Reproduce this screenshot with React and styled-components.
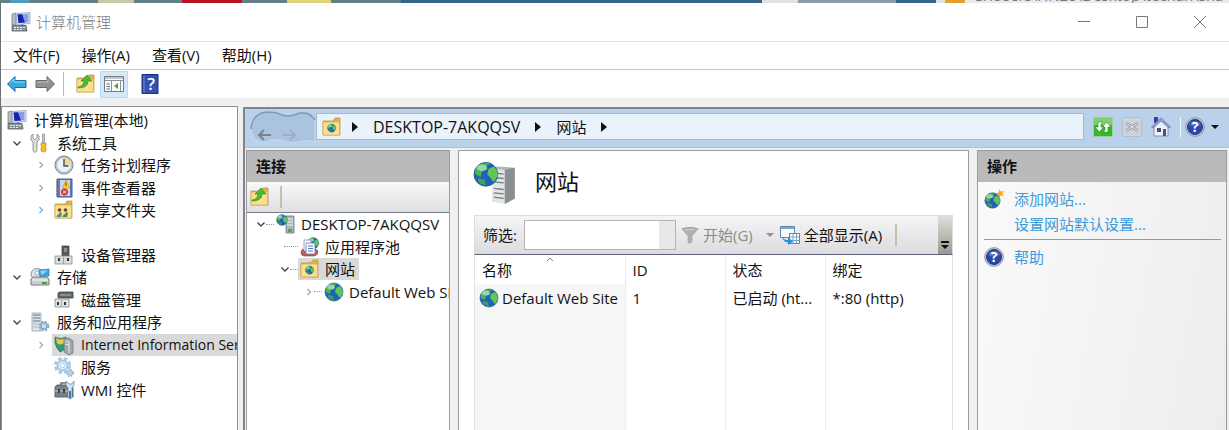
import { useState } from "react";
import styled, { createGlobalStyle } from "styled-components";

const GlobalStyle = createGlobalStyle`
  * {
    box-sizing: border-box;
  }

  html,
  body,
  #root {
    height: 100%;
    margin: 0;
  }

  body {
    overflow: hidden;
    background: #f0f0f0;
    color: #111;
    font: 15px/22px "Open Sans", "Noto Sans CJK SC", sans-serif;
  }

  button,
  input {
    font: inherit;
    color: inherit;
  }

  svg {
    display: block;
    flex: none;
    overflow: visible;
  }
`;

/* ---------- icons ---------- */

const Svg = ({ size = 20, children, ...rest }) => (
  <svg width={size} height={size} viewBox="0 0 20 20" aria-hidden="true" {...rest}>
    {children}
  </svg>
);

const ComputerIcon = () => (
  <Svg>
    <path d="M1 2l4-1v12H1z" fill="#b4bbc3" stroke="#7b848e" strokeWidth=".8" />
    <path d="M5 1.500l14-1v11l-13 1z" fill="#dfe5f0" stroke="#959fb6" strokeWidth=".8" />
    <path d="M6.500 2.500l11-.8v8.500l-10 .8z" fill="#8c9ce6" />
    <path d="M6.500 2.500l4.500-.3 3 8.300-6.500.5z" fill="#1226ad" />
    <path d="M11 12l4 2h-6z" fill="#75808e" />
    <path d="M1 13.500h14l1 5.500H1z" fill="#8a9298" stroke="#555e65" strokeWidth=".8" />
    <path d="M3 15.500h2m1 0h2m1 0h2m1 0h2M3 17.500h2m1 0h2m1 0h2" stroke="#e4e8ea" />
  </Svg>
);

const ToolsIcon = () => (
  <Svg>
    <path d="M3 1v4l2 2 2-2V1l2 2v4L7 9v8c0 3-4 3-4 0V9L1 7V3z" fill="#d8dcdf" stroke="#7f878d" strokeWidth=".8" />
    <path d="M12.500 1h2v9h-2z" fill="#bfc4c8" stroke="#80878c" strokeWidth=".6" />
    <path d="M11 10h5v3l-1 1 1 1v3q-2.500 2-5 0v-3l1-1-1-1z" fill="#f4bd27" stroke="#c38c10" strokeWidth=".7" />
  </Svg>
);

const ClockIcon = () => (
  <Svg>
    <circle cx="10" cy="10" r="9" fill="#b9bfc8" stroke="#7c8591" />
    <circle cx="10" cy="10" r="7" fill="#eef4fc" stroke="#d0d8e2" />
    <path d="M10 10V3a7 7 0 0 1 7 7z" fill="#f4d98c" />
    <path d="M10 4v7h4.500" fill="none" stroke="#424c63" strokeWidth="1.400" />
  </Svg>
);

const EventIcon = () => (
  <Svg>
    <path d="M3 1h15v18H3z" fill="#5e7ab8" stroke="#4a5f90" />
    <path d="M6 2h10v16H6z" fill="#c9d8ee" />
    <path d="M2 4h3M2 7h3m-3 3h3m-3 3h3m-3 3h3" stroke="#8b7076" />
    <path d="M12 2l4 8H8.500z" fill="#ffd62f" stroke="#d0930d" strokeWidth=".7" />
    <path d="M12 4.500v3.500" stroke="#444" />
    <circle cx="10.500" cy="14" r="3.500" fill="#d2372f" />
    <path d="M9 12.500l3 3m0-3l-3 3" stroke="#fff" />
  </Svg>
);

const FolderBase = () => (
  <>
    <path d="M1 4h10l2-3h5v17H1z" fill="#dfb252" stroke="#bd8e33" strokeWidth=".7" />
    <path d="M1 5h16.500v13H1z" fill="#fbdf8d" stroke="#d6aa4c" strokeWidth=".7" />
  </>
);

const SharedFolderIcon = () => (
  <Svg>
    <FolderBase />
    <circle cx="5.500" cy="10" r="1.800" fill="#5c4a34" />
    <path d="M2.500 17q0-2 2.500-3l1-2 2 1-1 4z" fill="#48908d" />
    <circle cx="11.500" cy="10" r="1.800" fill="#5c4a34" />
    <path d="M8.500 17q0-2 2.500-3l1-2 2 1-1 4z" fill="#4f8560" />
  </Svg>
);

const DeviceIcon = () => (
  <Svg>
    <path d="M8 1h7v10H8z" fill="#555c61" stroke="#32373a" strokeWidth=".7" />
    <path d="M10 3h3v4h-3z" fill="#8a9298" />
    <path d="M1 11h17v8H1z" fill="#d9dcde" stroke="#8b9195" strokeWidth=".8" />
    <path d="M5 13v3m9-3v3" stroke="#33393d" strokeWidth="2" />
    <path d="M9.500 12v7" stroke="#9ba1a4" />
  </Svg>
);

const StorageIcon = () => (
  <Svg>
    <ellipse cx="7" cy="7" rx="6" ry="5.500" fill="#dde5e9" stroke="#82949f" />
    <circle cx="7" cy="6" r="2" fill="#fff" stroke="#9caeb9" />
    <path d="M9 3l10-1v7l-9 1z" fill="#36a4e4" stroke="#317aad" strokeWidth=".7" />
    <path d="M10 4l8-1-6 5z" fill="#8fd5fa" />
    <path d="M1 12l2-2h14l2 2v6H1z" fill="#c9ced0" stroke="#747c81" />
    <path d="M2 13h16" stroke="#f8fafb" />
    <path d="M12 16h5" stroke="#3da734" strokeWidth="2" />
  </Svg>
);

const DiskIcon = () => (
  <Svg>
    <path d="M4 3l2-1h13v6H4z" fill="#5f676c" stroke="#393f43" strokeWidth=".8" />
    <path d="M6 5h11" stroke="#aeb5b8" />
    <path d="M1 9h14v8H1z" fill="#dfe1e2" stroke="#888e92" strokeWidth=".8" />
    <path d="M4 12v3m7-3v3" stroke="#32383c" strokeWidth="2" />
    <path d="M7.500 10v7" stroke="#a5abae" />
  </Svg>
);

const Gear = ({ x, y, r, fill = "#a9cbe6" }) => (
  <g transform={`translate(${x} ${y})`}>
    <circle r={r} fill="none" stroke={fill} strokeWidth={r / 1.500} strokeDasharray={`${r / 2} ${r / 3.400}`} />
    <circle r={r * 0.75} fill="#e8f3fb" stroke={fill} strokeWidth={r / 3} />
    <circle r={r / 3} fill="#fff" stroke="#7fa7c8" strokeWidth=".6" />
  </g>
);

const ServicesAppsIcon = () => (
  <Svg>
    <path d="M2 1h9v18H2z" fill="#dce4e8" stroke="#94a5af" strokeWidth=".8" />
    <path d="M3 3h7M3 6h7M3 9h7" stroke="#63737e" />
    <path d="M3 12h6M3 15h6" stroke="#a9b8c1" />
    <Gear x={14} y={14} r={4} fill="#80acd0" />
  </Svg>
);

const IisIcon = () => (
  <Svg>
    <path d="M1 2q6 3 11 0v9q-2 5-6 6-4-4-5-9z" fill="#2f9a74" stroke="#217451" strokeWidth=".7" />
    <path d="M2 3q5 3 9 0l-1 5q-4 3-7 0z" fill="#f0c83d" />
    <path d="M10 4l5-1 4 3v12l-4 2-5-3z" fill="#9ca8ad" stroke="#66757c" strokeWidth=".7" />
    <path d="M11 6l4 1v11M11 9l4 1" stroke="#e4ebee" fill="none" />
  </Svg>
);

const ServicesIcon = () => (
  <Svg>
    <Gear x={8.500} y={8.500} r={6.500} />
    <Gear x={16} y={16} r={3} fill="#94b9d6" />
  </Svg>
);

const WmiIcon = () => (
  <Svg>
    <path d="M7 6V3h6v3" fill="none" stroke="#666e73" strokeWidth="1.500" />
    <path d="M1 7l2-2h14l2 3v9H1z" fill="#778188" stroke="#475057" strokeWidth=".8" />
    <path d="M1 11h16" stroke="#c7ced2" />
    <path d="M5 9v4m5-4v4" stroke="#373f44" strokeWidth="2" />
    <path d="M12 1v4l2 3v10q2 2 4 0V8l2-3V1l-2 3h-3z" fill="#d3e6f5" stroke="#577e9f" strokeWidth=".7" />
    <path d="M16 11v7" stroke="#3875bb" strokeWidth="2" />
  </Svg>
);

const GlobeShape = () => (
  <>
    <circle cx="10" cy="10" r="9" fill="#1f62bb" stroke="#315f94" strokeWidth=".7" />
    <path d="M2 6a9 9 0 0 1 11-4l-3 2 1 2-4 2-1 4-4-2z" fill="#4db54a" />
    <path d="M12 6l4-2q3 3 3 7l-3 5-3-4-2-2z" fill="#62c657" />
    <path d="M4 13l5 1 1 4q-4 0-6-3z" fill="#3fa05a" />
    <ellipse cx="7" cy="5" rx="4" ry="2.500" fill="#d2f2fa" opacity=".55" />
  </>
);

const GlobeIcon = ({ size }) => (
  <Svg size={size}>
    <GlobeShape />
  </Svg>
);

const AddGlobeIcon = () => (
  <Svg>
    <g transform="translate(0 3) scale(.85)">
      <GlobeShape />
    </g>
    <path d="M15.500 0l1.200 2.500L20 2l-1.800 2.500L20 7l-3-.7L15 9l-.4-3.300-2.600-1 2.600-1.400z" fill="#f6a52a" />
  </Svg>
);

const SiteFolderIcon = () => (
  <Svg>
    <FolderBase />
    <g transform="translate(5 6.500) scale(.46)">
      <GlobeShape />
    </g>
  </Svg>
);

const ServerIcon = ({ size }) => (
  <Svg size={size}>
    <path d="M8.500 3l2-1 8 .6v14L14.500 19l-6-1z" fill="#aeb5b5" />
    <path d="M8.500 3l5.500.6V19l-5.500-1z" fill="#e2e6e7" />
    <path d="M14 3.600l4.500-1v14L14 19z" fill="#89908f" />
    <path d="M9 5l4.500.5M9 7l4.500.5M9 9l4.500.5M9 12l4.500.5M9 14l4.500.5M9 16l4.500.5" stroke="#737c80" strokeWidth=".6" />
    <g transform="translate(-.6 -.4) scale(.6)">
      <GlobeShape />
    </g>
  </Svg>
);

const ServerNodeIcon = () => (
  <Svg>
    <path d="M10 2h8v17h-8z" fill="#a8b6bd" stroke="#667982" strokeWidth=".8" />
    <path d="M11 5h6m-6 3h6m-6 3h6" stroke="#eff5f7" />
    <path d="M12 15h4v3h-4z" fill="#54a65a" />
    <g transform="translate(0 0) scale(.6)">
      <GlobeShape />
    </g>
  </Svg>
);

const PoolIcon = () => (
  <Svg>
    <g transform="translate(7 0) scale(.62)">
      <GlobeShape />
    </g>
    <path d="M1 15q0-3 4-3h9q4 0 4 3t-4 4H4q-3 0-3-4z" fill="#c75957" stroke="#8f3d41" strokeWidth=".6" />
    <path d="M4 3h7v11H4z" fill="#fff" stroke="#7d91bd" strokeWidth=".8" />
    <path d="M6 6h9v11H6z" fill="#f9fbff" stroke="#6480b8" strokeWidth=".8" />
    <path d="M8 9h5m-5 2.500h5M8 14h5" stroke="#5978b3" />
  </Svg>
);

const UpFolderIcon = () => (
  <Svg>
    <FolderBase />
    <path d="M2 13q6-1 6-6H5l6-6 5 6h-4q0 7-10 7z" fill="#4cbd32" stroke="#34901f" strokeWidth=".7" />
  </Svg>
);

const ArrowIcon = ({ forward }) => (
  <Svg>
    <path
      d={forward ? "M19.500 10L12 2.500v4H1v7h11v4z" : "M.5 10L8 2.500v4h11v7H8v4z"}
      fill={forward ? "#929292" : "#35a9e1"}
      stroke={forward ? "#686868" : "#19719f"}
    />
    <path d={forward ? "M2 8h11V5" : "M3 9l4-4v3h11"} fill="none" stroke={forward ? "#bebebe" : "#8ad8f8"} />
  </Svg>
);

const ConsoleIcon = () => (
  <Svg>
    <path d="M.5 2.500h19v15H.5z" fill="#fafafa" stroke="#737b82" />
    <path d="M1 4h18M1 6.500h18" stroke="#8b949b" strokeWidth="1.200" />
    <path d="M2.500 10H6m-3.500 2.500H6m-3.500 2.500H6" stroke="#656f77" />
    <path d="M7.500 7v10M16.500 7v10" stroke="#8b949b" />
    <path d="M14 9v6l-4-3z" fill="#42a83e" />
  </Svg>
);

const HelpBookIcon = () => (
  <Svg>
    <path d="M2 .5h16v19H2z" fill="#3350b2" stroke="#172e78" />
    <path d="M4 1v18" stroke="#758cd2" />
    <text x="11" y="16" textAnchor="middle" fontSize="17" fontWeight="600" fill="#fff">
      ?
    </text>
  </Svg>
);

const HelpIcon = () => (
  <Svg>
    <circle cx="10" cy="10" r="9.300" fill="#ccd0d9" stroke="#8c909b" />
    <circle cx="10" cy="10" r="7.500" fill="#2848aa" stroke="#233a83" />
    <path d="M4 8a6.500 6.500 0 0 1 12 0q-6 3-12 0z" fill="#718ad2" opacity=".6" />
    <text x="10" y="15" textAnchor="middle" fontSize="14" fontWeight="700" fill="#fff">
      ?
    </text>
  </Svg>
);

const RefreshIcon = () => (
  <Svg>
    <path d="M.5.5h19v19H.5z" fill="#39b52b" stroke="#a1cf9b" />
    <path d="M1 1h18v7H1z" fill="#7fd070" />
    <path d="M5 5h5L8 7v3h2.500L6.500 15 2 10h3zM15 15h-5l2-2v-3H9.500l4-5 4.500 5h-3z" fill="#fff" stroke="#2a8f25" strokeWidth=".6" />
  </Svg>
);

const StopIcon = () => (
  <Svg>
    <path d="M.5.500h19v19H.5z" fill="#cfd4da" stroke="#b6bfc9" />
    <path d="M4 6l12 8m0-8L4 14" stroke="#9fa5ad" strokeWidth="3" />
    <path d="M4 6l12 8m0-8L4 14" stroke="#e2e5e8" />
  </Svg>
);

const HomeIcon = () => (
  <Svg>
    <path d="M3 0h4v6H3z" fill="#3442a4" />
    <path d="M3 9l7-7 7 7v10H3z" fill="#edf0f7" stroke="#8b91ad" />
    <path d="M.5 10L10 .8 19.500 10l-2 .8L10 4l-7.500 6.800z" fill="#9aa3cf" stroke="#5e68a5" strokeWidth=".7" />
    <path d="M6 11h4v4H6z" fill="#454e68" />
    <path d="M12 12h3v7h-3z" fill="#3e51a0" />
  </Svg>
);

const FilterIcon = () => (
  <Svg size={18}>
    <path d="M1 3q9-3 18 0l-7 8v7l-4 1v-8z" fill="#b1b1b1" stroke="#a2a2a2" />
    <path d="M4 4h11" stroke="#d7d7d7" />
  </Svg>
);

const ShowAllIcon = () => (
  <Svg>
    <path d="M.5 1.500h14v11H.5z" fill="#f8fbff" stroke="#6585ad" />
    <path d="M1 3h13" stroke="#7da3d0" strokeWidth="2" />
    <path d="M9.500 8.500h10v10h-10z" fill="#fff" stroke="#6585ad" />
    <path d="M10 12h9m-9 3.500h9M13 9v9m3.500-9v9" stroke="#7aa2c9" />
    <path d="M2 9q0 6 6 6v-3l5 4.500L8 20v-2.500q-6 0-6-8.500z" fill="#2794d5" />
  </Svg>
);

const Chevron = ({ open, active }) => (
  <svg width="10" height="10" viewBox="0 0 10 10" aria-hidden="true">
    <path
      d={open ? "M1.500 3.500L5 7l3.500-3.500" : "M3.500 2L6.500 5 3.500 8"}
      fill="none"
      stroke={open ? "#404040" : active ? "#4fc0ee" : "#a6a6a6"}
      strokeWidth="1.300"
    />
  </svg>
);

const Triangle = ({ down }) => (
  <svg width="8" height="10" viewBox="0 0 8 10" aria-hidden="true">
    <path d={down ? "M0 3h8L4 7z" : "M1 0l6 5-6 5z"} fill="currentColor" />
  </svg>
);

const HistoryArrow = ({ forward }) => (
  <svg width="14" height="12" viewBox="0 0 14 12" aria-hidden="true">
    <path
      d={forward ? "M0 6h12M7 1l5 5-5 5" : "M14 6H2M7 1L2 6l5 5"}
      fill="none"
      stroke={forward ? "#98a9bb" : "#7b828a"}
      strokeWidth={forward ? 1.500 : 2}
    />
  </svg>
);

/* ---------- data ---------- */

const consoleTree = [
  { level: 0, label: "计算机管理(本地)", icon: ComputerIcon },
  { level: 1, label: "系统工具", icon: ToolsIcon, open: true },
  { level: 2, label: "任务计划程序", icon: ClockIcon, open: false },
  { level: 2, label: "事件查看器", icon: EventIcon, open: false },
  { level: 2, label: "共享文件夹", icon: SharedFolderIcon, open: false, active: true },
  null,
  { level: 2, label: "设备管理器", icon: DeviceIcon },
  { level: 1, label: "存储", icon: StorageIcon, open: true },
  { level: 2, label: "磁盘管理", icon: DiskIcon },
  { level: 1, label: "服务和应用程序", icon: ServicesAppsIcon, open: true },
  { level: 2, label: "Internet Information Services", icon: IisIcon, open: false, long: true },
  { level: 2, label: "服务", icon: ServicesIcon },
  { level: 2, label: "WMI 控件", icon: WmiIcon },
];

const siteTree = [
  { level: 0, label: "DESKTOP-7AKQQSV", icon: ServerNodeIcon, open: true },
  { level: 1, label: "应用程序池", icon: PoolIcon },
  { level: 1, label: "网站", icon: SiteFolderIcon, open: true, selected: true },
  { level: 2, label: "Default Web Site", icon: GlobeIcon, open: false },
];

const App = () => {
  const [selected, setSelected] = useState("Internet Information Services");
  const [filter, setFilter] = useState("");

  return (
    <>
      <GlobalStyle />
      <Desktop>
        <Wallpaper>
          <Patch $color="#4c9bc0" $start={10} $width={20} />
          <Patch $color="#c9c9a8" $start={68} $width={36} />
          <Patch $color="#b9111f" $start={48} $width={60} />
          <Patch $color="#ddd477" $start={45} $width={44} />
          <Patch $color="#33658a" $start={70} $width={361} />
          <Patch $color="#dfe3e5" $start={0} $width={36} />
          <Patch $color="#8d9ba6" $start={0} $width={98} />
          <Patch $color="#33658a" $start={0} $width={40} />
          <Patch $color="#dfe3e5" $start={0} $width={9} />
          <Patch $color="#dfa32c" $start={0} $width={20} />
          <PathText>C:\Users\HN20\Desktop\techan\sha</PathText>
        </Wallpaper>

        <Window>
          <TitleBar>
            <ComputerIcon />
            <Title>计算机管理</Title>
            <WindowButton aria-label="最小化">
              <svg width="12" height="12">
                <path d="M0 5.500h12" stroke="#777" />
              </svg>
            </WindowButton>
            <WindowButton aria-label="最大化">
              <svg width="12" height="12">
                <path d="M.5.500h11v11H.5z" fill="none" stroke="#777" />
              </svg>
            </WindowButton>
            <WindowButton aria-label="关闭">
              <svg width="12" height="12">
                <path d="M0 0l12 12M12 0L0 12" stroke="#777" />
              </svg>
            </WindowButton>
          </TitleBar>

          <MenuBar>
            {["文件(F)", "操作(A)", "查看(V)", "帮助(H)"].map(item => (
              <PlainButton key={item}>{item}</PlainButton>
            ))}
          </MenuBar>

          <ToolBar>
            <ToolButton aria-label="后退">
              <ArrowIcon />
            </ToolButton>
            <ToolButton aria-label="前进">
              <ArrowIcon forward />
            </ToolButton>
            <Divider />
            <ToolButton aria-label="上一级">
              <UpFolderIcon />
            </ToolButton>
            <ToolButton aria-label="显示控制台树" $pressed>
              <ConsoleIcon />
            </ToolButton>
            <ToolButton aria-label="帮助主题">
              <HelpBookIcon />
            </ToolButton>
          </ToolBar>

          <Main>
            <ConsolePane>
              <ConsoleTree>
                {consoleTree.map((node, i) =>
                  node ? (
                    <ConsoleRow key={node.label} $level={node.level}>
                      {node.level > 0 && (
                        <Toggle>
                          {node.open !== undefined && <Chevron open={node.open} active={node.active} />}
                        </Toggle>
                      )}
                      <ConsoleItem
                        $selected={selected === node.label}
                        $long={node.long}
                        onClick={() => setSelected(node.label)}
                      >
                        <node.icon />
                        {node.label}
                      </ConsoleItem>
                    </ConsoleRow>
                  ) : (
                    <li key={i} aria-hidden="true" />
                  )
                )}
              </ConsoleTree>
            </ConsolePane>

            <Manager>
              <AddressBar>
                <History>
                  <HistoryShape viewBox="0 0 66 32" aria-hidden="true">
                    <path
                      d="M8 30Q1 26 1 17 2 2 18 1q8 0 14 3 6 2 12 0 14-6 21 5v22q-8-3-16 0-8 2-16-1-10-3-16 1-5 1-9-1z"
                      fill="#aac4e0"
                      stroke="#c7dbef"
                    />
                    <path d="M1 18Q2 2 18 1q8 0 14 3 6 2 12 0 14-6 21 5" fill="none" stroke="#7f9cbd" strokeWidth="1.500" />
                  </HistoryShape>
                  <HistoryButtons>
                    <PlainButton aria-label="后退">
                      <HistoryArrow />
                    </PlainButton>
                    <PlainButton aria-label="前进">
                      <HistoryArrow forward />
                    </PlainButton>
                  </HistoryButtons>
                </History>
                <Address>
                  <SiteFolderIcon />
                  <Triangle />
                  <HostName>DESKTOP-7AKQQSV</HostName>
                  <Triangle />
                  <span>网站</span>
                  <Triangle />
                </Address>
                <AddressTools>
                  <PlainButton aria-label="刷新">
                    <RefreshIcon />
                  </PlainButton>
                  <PlainButton aria-label="停止">
                    <StopIcon />
                  </PlainButton>
                  <PlainButton aria-label="主页">
                    <HomeIcon />
                  </PlainButton>
                  <HelpButton aria-label="帮助">
                    <HelpIcon />
                    <Triangle down />
                  </HelpButton>
                </AddressTools>
              </AddressBar>

              <Columns>
                <Panel>
                  <PanelTitle>连接</PanelTitle>
                  <ConnectionTools>
                    <PlainButton aria-label="连接上一级">
                      <UpFolderIcon />
                    </PlainButton>
                    <Rule />
                  </ConnectionTools>
                  <SiteTree>
                    {siteTree.map(node => (
                      <SiteRow key={node.label} $level={node.level}>
                        <Toggle>{node.open !== undefined && <Chevron open={node.open} />}</Toggle>
                        <Dots $wide={node.open === undefined} />
                        <SiteItem $selected={node.selected}>
                          <node.icon />
                          {node.label}
                        </SiteItem>
                      </SiteRow>
                    ))}
                  </SiteTree>
                </Panel>

                <Content>
                  <Heading>
                    <ServerIcon size={44} />
                    <h1>网站</h1>
                  </Heading>
                  <FilterBar>
                    <label htmlFor="filter">筛选:</label>
                    <FilterBox>
                      <input id="filter" value={filter} onChange={e => setFilter(e.target.value)} />
                      <button aria-label="筛选历史记录" />
                    </FilterBox>
                    <FilterButton disabled>
                      <FilterIcon />
                      开始(G)
                    </FilterButton>
                    <FilterArrow>
                      <Triangle down />
                    </FilterArrow>
                    <FilterButton>
                      <ShowAllIcon />
                      全部显示(A)
                    </FilterButton>
                    <Rule />
                    <Overflow aria-label="更多">
                      <svg width="8" height="9" viewBox="0 0 8 9">
                        <path d="M0 1h8" stroke="#111" strokeWidth="2" />
                        <path d="M0 4h8L4 8z" fill="#111" />
                      </svg>
                    </Overflow>
                  </FilterBar>
                  <TableArea>
                    <Table>
                      <colgroup>
                        <NameCol />
                        <SmallCol />
                        <SmallCol />
                        <col />
                      </colgroup>
                      <thead>
                        <tr>
                          <th>
                            <SortMark width="8" height="5" viewBox="0 0 8 5" aria-hidden="true">
                              <path d="M1 4l3-3 3 3" fill="none" stroke="#888" />
                            </SortMark>
                            名称
                          </th>
                          <th>ID</th>
                          <th>状态</th>
                          <th>绑定</th>
                        </tr>
                      </thead>
                      <tbody>
                        <tr>
                          <td>
                            <SiteName>
                              <GlobeIcon />
                              Default Web Site
                            </SiteName>
                          </td>
                          <td>1</td>
                          <td>已启动 (ht...</td>
                          <td>*:80 (http)</td>
                        </tr>
                        <tr aria-hidden="true">
                          <td />
                          <td />
                          <td />
                          <td />
                        </tr>
                      </tbody>
                    </Table>
                  </TableArea>
                </Content>

                <Panel $shaded>
                  <PanelTitle>操作</PanelTitle>
                  <Actions>
                    <li>
                      <AddGlobeIcon />
                      <a href="#add">添加网站...</a>
                    </li>
                    <li>
                      <a href="#defaults">设置网站默认设置...</a>
                    </li>
                  </Actions>
                  <Actions>
                    <li>
                      <HelpIcon />
                      <a href="#help">帮助</a>
                    </li>
                  </Actions>
                </Panel>
              </Columns>
            </Manager>
          </Main>
        </Window>
      </Desktop>
    </>
  );
};

export default App;

/* ---------- window frame ---------- */

const Desktop = styled.div`
  display: flex;
  flex-direction: column;
  height: 100vh;
  overflow: hidden;
`;

const Wallpaper = styled.div`
  display: flex;
  flex: none;
  height: 3px;
  overflow: hidden;
  background: #627f88;
`;

const Patch = styled.span`
  flex: none;
  width: ${props => props.$width}px;
  margin-left: ${props => props.$start}px;
  background: ${props => props.$color};
`;

const PathText = styled.span`
  display: flex;
  flex: 1;
  align-items: flex-end;
  height: 8px;
  margin-top: -5px;
  padding-left: 8px;
  background: #e8eaec;
  color: #777;
  line-height: 15px;
  white-space: nowrap;
`;

const Window = styled.div`
  display: flex;
  flex: 1;
  flex-direction: column;
  min-height: 0;
  border-left: 1px solid #6c7376;
  background: #f0f0f0;
`;

const TitleBar = styled.header`
  display: flex;
  flex: none;
  align-items: center;
  height: 39px;
  padding-left: 10px;
  border-bottom: 1px solid #e4e4e4;
  background: #fff;
`;

const Title = styled.span`
  flex: 1;
  padding-left: 5px;
  color: #808080;
  font-weight: 300;
`;

const PlainButton = styled.button`
  padding: 0;
  border: 0;
  background: none;
  white-space: nowrap;
`;

const WindowButton = styled(PlainButton)`
  display: grid;
  place-items: center;
  width: 58px;
  height: 100%;
`;

const MenuBar = styled.nav`
  display: flex;
  flex: none;
  align-items: flex-start;
  gap: 22px;
  height: 28px;
  padding: 2px 12px;
  border-bottom: 1px solid #c6c6c6;
  background: #fff;
`;

const ToolBar = styled.div`
  display: flex;
  flex: none;
  align-items: center;
  height: 28px;
  padding-left: 2px;
  background: #fff;
`;

const ToolButton = styled(PlainButton)`
  display: grid;
  place-items: center;
  width: 28px;
  height: 27px;
  margin-right: ${props => (props.$pressed ? "8px" : "0")};
  border: 1px solid ${props => (props.$pressed ? "#b9dcf5" : "transparent")};
  background: ${props => (props.$pressed ? "#d3e9f9" : "none")};
`;

const Divider = styled.span`
  width: 1px;
  height: 24px;
  margin: 0 8px 0 4px;
  background: #b9b9b9;
`;

const Main = styled.main`
  display: grid;
  flex: 1;
  grid-template-columns: 237px minmax(0, 1fr);
  gap: 5px;
  min-height: 0;
  padding-top: 8px;
`;

/* ---------- console tree ---------- */

const ConsolePane = styled.aside`
  overflow: hidden;
  padding-top: 2px;
  border: solid #8d9196;
  border-width: 1px 1px 0;
  background: #fff;
`;

const ConsoleTree = styled.ul`
  display: grid;
  grid-template-rows: repeat(13, 1fr);
  height: 292px;
  margin: 0;
  padding: 0;
  list-style: none;
`;

const ConsoleRow = styled.li`
  display: flex;
  align-items: center;
  min-height: 0;
  padding-left: ${props => [0, 10, 34][props.$level]}px;
  white-space: nowrap;
`;

const Toggle = styled.span`
  flex: none;
  width: 10px;

  + button {
    margin-left: 6px;
  }
`;

const ConsoleItem = styled(PlainButton)`
  display: flex;
  flex: ${props => (props.$selected ? 1 : "none")};
  align-items: center;
  gap: 7px;
  height: 22px;
  margin-left: 3px;
  padding-left: 2px;
  background: ${props => (props.$selected ? "#d9d9d9" : "none")};
  font-size: ${props => (props.$long ? 14 : 15)}px;
  line-height: 22px;
`;

/* ---------- iis manager ---------- */

const Manager = styled.section`
  display: flex;
  flex-direction: column;
  min-width: 0;
  margin-top: 1px;
  border: solid #7f858c;
  border-width: 2px 0 0 2px;
  background: #eff0f2;
`;

const AddressBar = styled.div`
  display: flex;
  flex: none;
  align-items: center;
  height: 39px;
  padding: 0 10px 3px 5px;
  border-bottom: 1px solid #a9c1dc;
  background: #b9d1ea;
`;

const History = styled.div`
  display: grid;
  width: 66px;
  height: 32px;

  > * {
    grid-area: 1 / 1;
  }
`;

const HistoryShape = styled.svg`
  width: 66px;
  height: 32px;
`;

const HistoryButtons = styled.div`
  display: flex;
  align-items: flex-end;
  gap: 12px;
  padding: 0 0 2px 7px;
`;

const Address = styled.div`
  display: flex;
  flex: 1;
  align-items: center;
  gap: 14px;
  height: 27px;
  padding-left: 5px;
  border: 1px solid #9fb9d5;
  background: #eaf3fc;
  line-height: 20px;
  white-space: nowrap;

  > svg:first-child {
    margin-right: -5px;
  }
`;

const HostName = styled.span`
  font-size: 16px;
`;

const AddressTools = styled.div`
  display: flex;
  align-items: center;
  gap: 9px;
  padding-left: 9px;
`;

const HelpButton = styled(PlainButton)`
  display: flex;
  align-items: center;
  gap: 6px;
  padding-left: 4px;
  border-left: 1px solid #f4f8fc;
`;

const Columns = styled.div`
  display: grid;
  flex: 1;
  grid-template-columns: 204px minmax(0, 1fr) 250px;
  gap: 8px;
  min-height: 0;
  padding: 2px 2px 0 1px;
`;

const Panel = styled.section`
  display: flex;
  flex-direction: column;
  min-width: 0;
  overflow: hidden;
  border: solid #999da2;
  border-width: 1px 1px 0;
  background: ${props => (props.$shaded ? "linear-gradient(100deg, #fafafa, #ededee)" : "#fff")};
`;

const PanelTitle = styled.h2`
  flex: none;
  height: 31px;
  margin: 0;
  padding-left: 9px;
  background: #bababa;
  font-size: 15px;
  font-weight: 700;
  line-height: 31px;
`;

const ConnectionTools = styled.div`
  display: flex;
  flex: none;
  align-items: center;
  gap: 10px;
  height: 31px;
  padding-left: 3px;
  border-bottom: 1px solid #777b85;
  background: linear-gradient(#f8f8f8, #dedfe2);
`;

const Rule = styled.span`
  width: 2px;
  height: 22px;
  background: #c3c0ae;
`;

const SiteTree = styled.ul`
  display: grid;
  flex: none;
  grid-template-rows: repeat(4, 1fr);
  height: 90px;
  margin: 0;
  padding: 0;
  list-style: none;
`;

const SiteRow = styled.li`
  display: flex;
  align-items: center;
  min-height: 0;
  padding-left: ${props => 9 + props.$level * 24}px;
  white-space: nowrap;
`;

const Dots = styled.span`
  flex: none;
  width: ${props => (props.$wide ? 14 : 8)}px;
  margin-left: ${props => (props.$wide ? -6 : 0)}px;
  border-top: 1px dotted #999;
`;

const SiteItem = styled(PlainButton)`
  display: flex;
  align-items: center;
  gap: 5px;
  height: 22px;
  padding: 0 4px 0 2px;
  background: ${props => (props.$selected ? "#d9d9d9" : "none")};
`;

/* ---------- content ---------- */

const Content = styled.section`
  display: flex;
  flex-direction: column;
  min-width: 0;
  padding: 11px 15px 0;
  border: solid #999da2;
  border-width: 1px 1px 0;
  background: #fff;
`;

const Heading = styled.div`
  display: flex;
  flex: none;
  gap: 17px;
  height: 53px;

  h1 {
    margin: 0;
    font-size: 22px;
    font-weight: 400;
    line-height: 38px;
  }
`;

const FilterBar = styled.div`
  display: flex;
  flex: none;
  align-items: center;
  height: 40px;
  padding-left: 8px;
  border: 1px solid #dcdcdf;
  border-bottom: 1px solid #5d6078;
  background: linear-gradient(#f5f5f6, #dcdce0);
  white-space: nowrap;
`;

const FilterBox = styled.span`
  display: flex;
  width: 152px;
  height: 30px;
  margin: 0 5px 0 7px;
  border: 1px solid #b4b4b4;

  input {
    flex: 1;
    min-width: 0;
    padding: 0 4px;
    border: 0;
    background: #fff;
  }

  button {
    width: 16px;
    padding: 0;
    border: 0;
    background: #e8e8ea;
  }
`;

const FilterButton = styled(PlainButton)`
  display: flex;
  align-items: center;
  gap: 4px;
  color: ${props => (props.disabled ? "#8b8b8b" : "#111")};

  + span {
    margin-left: 13px;
  }
`;

const FilterArrow = styled.span`
  margin-right: 6px;
  color: #a18e86;
`;

const Overflow = styled(PlainButton)`
  display: flex;
  align-items: flex-end;
  justify-content: center;
  align-self: stretch;
  width: 14px;
  margin-left: auto;
  padding-bottom: 4px;
  background: linear-gradient(#dedfdb, #989b90);
`;

const TableArea = styled.div`
  flex: 1;
  min-height: 0;
  overflow: hidden;
  border: solid #dfe2ea;
  border-width: 0 1px;
`;

const Table = styled.table`
  width: 100%;
  height: 100%;
  border-collapse: collapse;
  table-layout: fixed;

  th,
  td {
    position: relative;
    height: 28px;
    padding: 0 0 0 7px;
    border-right: 1px solid #e8ebf2;
    font-weight: 400;
    text-align: left;
    white-space: nowrap;
  }

  th {
    height: 29px;
  }

  th:last-child,
  td:last-child {
    border-right: 0;
  }

  td:first-child {
    padding-left: 4px;
    background: #f6f6f6;
  }

  tr:last-child td {
    height: auto;
  }

  tbody tr:first-child td {
    height: 28px;
  }
`;

const NameCol = styled.col`
  width: 150px;
`;

const SmallCol = styled.col`
  width: 100px;
`;

const SortMark = styled.svg`
  position: absolute;
  top: 2px;
  left: 71px;
`;

const SiteName = styled.span`
  display: flex;
  align-items: center;
  gap: 3px;
`;

/* ---------- actions ---------- */

const Actions = styled.ul`
  display: grid;
  gap: 3px;
  margin: 0 5px 0 6px;
  padding: 6px 0 4px;
  list-style: none;

  + ul {
    border-top: 1px solid #999;
  }

  li {
    display: flex;
    align-items: center;
    gap: 10px;
  }

  a {
    color: #3c9ad8;
    text-decoration: none;
  }

  a:first-child {
    padding-left: 30px;
  }
`;
